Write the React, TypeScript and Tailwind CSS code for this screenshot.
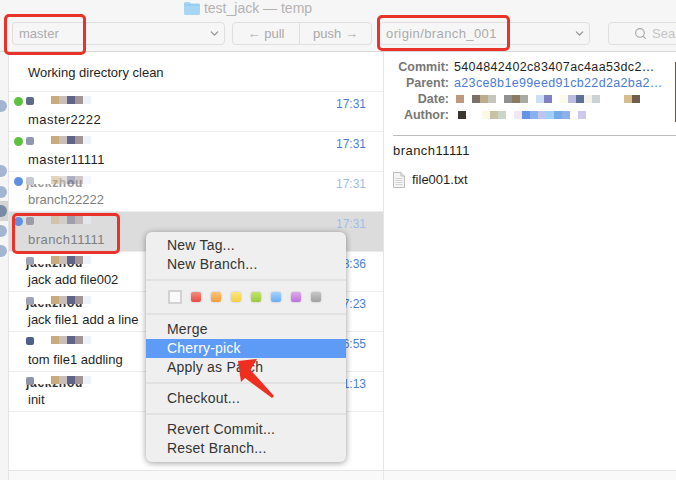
import { ChevronDown, Search } from 'lucide-react'

const font = "font-['Liberation_Sans',Arial,sans-serif]"

type Commit = {
  message: string
  time: string
  dot?: 'green' | 'blue'
  faded?: boolean
  selected?: boolean
  showName?: boolean
  wide?: boolean
  avatar: string
}

const commits: Commit[] = [
  { message: 'master2222', time: '17:31', dot: 'green', wide: true, avatar: 'bg-[#5f6a88]' },
  { message: 'master11111', time: '17:31', dot: 'green', wide: true, avatar: 'bg-[#8f98ae]' },
  { message: 'branch22222', time: '17:31', dot: 'blue', faded: true, showName: true, avatar: 'bg-[#c4c8d2]' },
  { message: 'branch11111', time: '17:31', dot: 'blue', faded: true, selected: true, wide: true, avatar: 'bg-[#9a9ca6]' },
  { message: 'jack add file002', time: '18:36', showName: true, avatar: 'bg-[#9aa2b8]' },
  { message: 'jack file1 add a line', time: '17:23', showName: true, avatar: 'bg-[#9aa2b8]' },
  { message: 'tom file1 addling', time: '16:55', avatar: 'bg-[#4f5f88]' },
  { message: 'init', time: '11:13', showName: true, avatar: 'bg-[#8e94a8]' },
]

const swatches = [
  'from-[#f58a80] to-[#e8483f]',
  'from-[#fbc37a] to-[#f29c35]',
  'from-[#fbe77c] to-[#f3cf3f]',
  'from-[#c5e46c] to-[#9acb3a]',
  'from-[#a5d2fb] to-[#66aef5]',
  'from-[#dcA8ec] to-[#bd72dd]',
  'from-[#c6c6c6] to-[#a0a0a0]',
]

// the blurred-out author name: a white patch, then the mosaic blocks
function Pixels({ faded, selected }: { faded?: boolean; selected?: boolean }) {
  return (
    <div className="absolute left-[25px] top-[4px] flex h-[8px]">
      <div className={`w-[17px] ${selected ? '' : 'bg-white'}`} />
      <div className={`flex ${faded ? 'opacity-50' : ''}`}>
        <div className="w-[8px] bg-[#c9ab7d]" />
        <div className="w-[8px] bg-[#c8bfb8]" />
        <div className="w-[8px] bg-[#5f6488]" />
        <div className="w-[8px] bg-[#a59594]" />
        <div className="w-[8px] bg-[#eaf2fa]" />
      </div>
    </div>
  )
}

function CommitRow({ commit }: { commit: Commit }) {
  return (
    <div
      className={`relative h-[40px] shrink-0 border-b border-[#ececec] ${commit.selected ? 'bg-[#dcdcdc]' : 'bg-white'}`}
    >
      {commit.showName && (
        <div
          className={`absolute left-[17px] top-[5px] text-[12px] font-bold leading-[13px] tracking-[0.7px] ${
            commit.faded ? 'text-[#999]' : 'text-[#333]'
          }`}
        >
          jackzhou
        </div>
      )}
      <Pixels faded={commit.faded} selected={commit.selected} />
      <div className="relative flex h-[19px] items-start pl-[5px] pt-[5px]">
        <div
          className={`mr-[3px] size-[9px] rounded-full ${
            commit.dot === 'green' ? 'bg-[#5cc13c]' : commit.dot === 'blue' ? 'bg-[#5f90e0]' : 'bg-transparent'
          }`}
        />
        <div className={`h-[8px] w-[8px] rounded-[2px] ${commit.avatar}`} />
      </div>
      <div
        className={`pl-[19px] text-[13px] leading-[18px] ${commit.wide ? 'tracking-[0.45px]' : ''} ${
          commit.faded ? 'text-[#7f7f7f]' : 'text-[#1f1f1f]'
        }`}
      >
        {commit.message}
      </div>
      <div className={`absolute right-[17px] top-[3px] text-[12px] ${commit.faded ? 'text-[#9dbcec]' : 'text-[#4a80dc]'}`}>
        {commit.time}
      </div>
    </div>
  )
}

function Combo({ label, width, wide }: { label: string; width: string; wide?: boolean }) {
  return (
    <div className={`flex h-[23px] ${width} shrink-0 items-center justify-between rounded-[4px] border border-[#dfdfdf] pl-[6px] pr-[3px]`}>
      <span className={`text-[13px] text-[#ababab] ${wide ? 'tracking-[0.4px]' : ''}`}>{label}</span>
      <ChevronDown size={13} className="text-[#8c8c8c]" />
    </div>
  )
}

function MenuItem({ label, active }: { label: string; active?: boolean }) {
  return (
    <div className={`h-[19px] pl-[21px] text-[14px] leading-[18px] tracking-[0.2px] ${active ? 'bg-[#5e9bf6] text-white' : 'text-[#333]'}`}>
      {label}
    </div>
  )
}

function MenuSep() {
  return <div className="my-[5px] h-[2px] bg-[#e2e2e2]" />
}

function Meta({ label, children }: { label: string; children: React.ReactNode }) {
  return (
    <div className="flex h-[16px] items-center">
      <div className="w-[57px] text-right text-[12.5px] font-bold text-[#777]">{label}</div>
      <div className="ml-[5px] whitespace-nowrap text-[12.5px] tracking-[0.35px]">{children}</div>
    </div>
  )
}

export default function App() {
  return (
    <div className={`relative flex h-[480px] w-[676px] flex-col overflow-hidden bg-white ${font}`}>
      {/* toolbar */}
      <div className="h-[52px] shrink-0 overflow-hidden border-b border-[#d8d8d8] bg-[#f6f6f6]">
        <div className="flex h-[22px] items-start justify-center pr-[180px]">
          <svg width="16" height="14" viewBox="0 0 16 14" className="mr-[4px] mt-[1px]">
            <path d="M0 2.5 Q0 1 1.5 1 H5.5 L7 2.5 H14.5 Q16 2.5 16 4 V12.5 Q16 14 14.5 14 H1.5 Q0 14 0 12.5 Z" fill="#a6d6f4" />
            <path d="M0 4 H16" stroke="#8cc6ec" strokeWidth="1" />
          </svg>
          <span className="text-[14px] leading-[17px] text-[#b3b3b3]">test_jack — temp</span>
        </div>
        <div className="flex items-center pl-[12px]">
          <Combo label="master" width="w-[213px]" />
          <div className="ml-[7px] flex h-[23px] w-[140px] shrink-0 rounded-[4px] border border-[#dfdfdf] text-[13px] text-[#a9a9a9]">
            <div className="flex w-[67px] items-center justify-center border-r border-[#dfdfdf]">← pull</div>
            <div className="flex flex-1 items-center justify-center">push →</div>
          </div>
          <div className="ml-[7px]">
            <Combo label="origin/branch_001" width="w-[211px]" wide />
          </div>
          <div className="ml-[18px] flex h-[23px] w-[90px] shrink-0 items-center rounded-[4px] border border-[#dfdfdf] pl-[25px] text-[13px] text-[#c4c4c4]">
            <Search size={13} className="mr-[5px] shrink-0 text-[#a5a5a5]" />
            Search
          </div>
        </div>
      </div>

      <div className="flex min-h-0 flex-1">
        {/* gutter */}
        <div className="w-[9px] shrink-0 overflow-hidden border-r border-[#e4e4e4] bg-[#f5f5f5]">
          <div className="-ml-[5px] mt-[48px] size-[12px] rounded-full bg-[#a4b5d2]" />
          <div className="-ml-[5px] mt-[53px] size-[12px] rounded-full bg-[#a4b5d2]" />
          <div className="-ml-[5px] mt-[9px] size-[12px] rounded-full bg-[#a4b5d2]" />
          <div className="mt-[3px] flex h-[20px] items-center bg-[#d4d4d4]">
            <div className="-ml-[5px] size-[12px] rounded-full bg-[#7b8aa4]" />
          </div>
          <div className="-ml-[5px] mt-[4px] size-[12px] rounded-full bg-[#a4b5d2]" />
          <div className="-ml-[5px] mt-[8px] size-[12px] rounded-full bg-[#a4b5d2]" />
        </div>

        {/* commit list */}
        <div className="flex w-[374px] shrink-0 flex-col">
          <div className="flex h-[40px] shrink-0 items-center border-b border-[#ececec] pl-[19px] pt-[2px] text-[13px] text-[#1f1f1f]">
            Working directory clean
          </div>
          {commits.map((commit) => (
            <CommitRow key={commit.message} commit={commit} />
          ))}
          <div className="flex-1" />
          <div className="h-[10px] shrink-0 border-t border-[#e6e6e6] bg-[#f9f9f9]" />
        </div>

        {/* details */}
        <div className="flex min-w-0 flex-1 flex-col border-l border-[#e6e6e6]">
          <div className="relative h-[83px] shrink-0 pl-[8px] pt-[7px]">
            <Meta label="Commit:">
              <span className="text-[#1f1f1f]">5404842402c83407ac4aa53dc2…</span>
            </Meta>
            <Meta label="Parent:">
              <span className="text-[#4a7bd8]">a23ce8b1e99eed91cb22d2a2ba2…</span>
            </Meta>
            <Meta label="Date:">
              <div className="flex h-[8px] w-[200px] items-center">
                <div className="ml-[2px] h-[8px] w-[8px] bg-[#c09880]" />
                <div className="ml-[8px] h-[8px] w-[8px] bg-[#7d7068]" />
                <div className="h-[8px] w-[8px] bg-[#bcae8a]" />
                <div className="h-[8px] w-[8px] bg-[#c5c5bd]" />
                <div className="ml-[8px] h-[8px] w-[8px] bg-[#909090]" />
                <div className="h-[8px] w-[8px] bg-[#8d7a62]" />
                <div className="h-[8px] w-[8px] bg-[#a9aaa0]" />
                <div className="ml-[8px] h-[8px] w-[8px] bg-[#cbdff4]" />
                <div className="h-[8px] w-[8px] bg-[#8080c4]" />
                <div className="ml-[8px] h-[8px] w-[8px] bg-[#fbfbec]" />
                <div className="h-[8px] w-[8px] bg-[#b8bedc]" />
                <div className="h-[8px] w-[8px] bg-[#5f7096]" />
                <div className="h-[8px] w-[8px] bg-[#f5f2ea]" />
                <div className="h-[8px] w-[8px] bg-[#cdd2d2]" />
                <div className="ml-[24px] h-[8px] w-[8px] bg-[#d8bd8c]" />
                <div className="h-[8px] w-[8px] bg-[#6f5e50]" />
              </div>
            </Meta>
            <Meta label="Author:">
              <div className="flex h-[8px] w-[150px] items-center">
                <div className="ml-[4px] h-[8px] w-[8px] bg-[#3d362c]" />
                <div className="ml-[16px] h-[8px] w-[8px] bg-[#fafae4]" />
                <div className="h-[8px] w-[8px] bg-[#c9c2a4]" />
                <div className="h-[8px] w-[8px] bg-[#ccd3c8]" />
                <div className="ml-[8px] h-[8px] w-[8px] bg-[#f4e6f2]" />
                <div className="h-[8px] w-[8px] bg-[#6595e8]" />
                <div className="h-[8px] w-[8px] bg-[#8bb0ee]" />
                <div className="h-[8px] w-[8px] bg-[#bfc4ee]" />
                <div className="h-[8px] w-[8px] bg-[#9fd0f6]" />
                <div className="h-[8px] w-[8px] bg-[#75aaea]" />
                <div className="h-[8px] w-[8px] bg-[#8db0ea]" />
                <div className="ml-[8px] h-[8px] w-[8px] bg-[#cfc8ee]" />
              </div>
            </Meta>
            <div className="absolute right-0 top-[10px] h-[60px] w-px bg-[#5d5a48]" />
          </div>
          <div className="ml-[9px] h-px shrink-0 bg-[#bdbdbd]" />
          <div className="pl-[9px] pt-[6px] text-[13px] leading-[18px] tracking-[0.45px] text-[#1f1f1f]">branch11111</div>
          <div className="flex items-center pl-[9px] pt-[10px] text-[13px] text-[#1f1f1f]">
            <svg width="12" height="16" viewBox="0 0 12 16" className="mr-[7px]">
              <path d="M.5.5 H8 L11.5 4 V15.5 H.5 Z" fill="#f4f4f4" stroke="#bdbdbd" />
              <path d="M8 .5 V4 H11.5" fill="#e6e6e6" stroke="#bdbdbd" />
              <path d="M2.5 6.5 H9.5 M2.5 8.5 H9.5 M2.5 10.5 H9.5 M2.5 12.5 H9.5" stroke="#d4d4d4" />
            </svg>
            file001.txt
          </div>
          <div className="flex-1" />
          <div className="h-[10px] shrink-0 border-t border-[#e6e6e6] bg-[#f9f9f9]" />
        </div>
      </div>

      {/* context menu */}
      <div className="absolute left-[146px] top-[232px] w-[200px] rounded-[6px] bg-[#efefef] py-[4px] shadow-[0_1px_6px_rgba(0,0,0,0.4)]">
        <MenuItem label="New Tag..." />
        <MenuItem label="New Branch..." />
        <MenuSep />
        <div className="flex h-[22px] items-center pl-[22px]">
          <div className="mr-[9px] size-[14px] border-2 border-[#d2d2d2] bg-[#fafafa]" />
          {swatches.map((swatch) => (
            <div key={swatch} className={`mr-[10px] size-[10px] rounded-[2px] bg-gradient-to-b shadow-[0_0_2px_rgba(0,0,0,0.25)] ${swatch}`} />
          ))}
        </div>
        <MenuSep />
        <MenuItem label="Merge" />
        <MenuItem label="Cherry-pick" active />
        <MenuItem label="Apply as Patch" />
        <MenuSep />
        <MenuItem label="Checkout..." />
        <MenuSep />
        <MenuItem label="Revert Commit..." />
        <MenuItem label="Reset Branch..." />
      </div>

      {/* annotations */}
      <div className="absolute left-[4px] top-[14px] h-[41px] w-[82px] rounded-[5px] border-[3px] border-[#e8322a]" />
      <div className="absolute left-[377px] top-[15px] h-[36px] w-[133px] rounded-[5px] border-[3px] border-[#e8322a]" />
      <div className="absolute left-[12px] top-[213px] h-[41px] w-[108px] rounded-[5px] border-[3px] border-[#e8322a]" />
      <svg width="50" height="50" viewBox="0 0 50 50" className="absolute left-[232px] top-[355px]">
        <path d="M6 6 L25 4 L18.5 15 L42 41 L40 43 L13 23 L9 27 Z" fill="#ee2f1f" />
      </svg>
    </div>
  )
}
